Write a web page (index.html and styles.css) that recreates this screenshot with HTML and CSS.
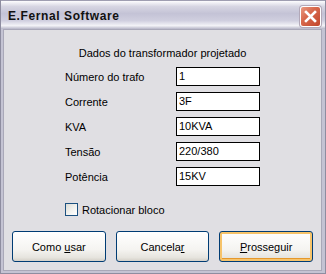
FILE: index.html
```html
<!DOCTYPE html>
<html lang="pt">
<head>
  <meta charset="utf-8">
  <title>E.Fernal Software</title>
  <link rel="stylesheet" href="styles.css">
</head>
<body>
  <div class="window">
    <!-- barra de titulo -->
    <div class="titlebar">
      <span class="title">E.Fernal Software</span>
      <a href="javascript:;" class="close">
        <svg width="21" height="21" viewBox="0 0 21 21">
          <path d="M6 6 L15 15 M15 6 L6 15" stroke="#fff" stroke-width="2.6" stroke-linecap="square"/>
        </svg>
      </a>
    </div>

    <div class="client">
      <p class="heading">Dados do transformador projetado</p>

      <div class="fields">
        <label>Número do trafo</label>
        <input type="text" value="1">
        <label>Corrente</label>
        <input type="text" value="3F">
        <label>KVA</label>
        <input type="text" value="10KVA">
        <label>Tensão</label>
        <input type="text" value="220/380">
        <label>Potência</label>
        <input type="text" value="15KV">
      </div>

      <div class="check-row">
        <span class="check"></span>
        <span>Rotacionar bloco</span>
      </div>

      <div class="buttons">
        <button>Como <u>u</u>sar</button>
        <button>Cancela<u>r</u></button>
        <button class="default"><u>P</u>rosseguir</button>
      </div>
    </div>
  </div>
</body>
</html>
```

FILE: styles.css
```css
* {
  margin: 0;
  padding: 0;
  box-sizing: border-box;
}
body {
  background: #e0dfe3;
  font-family: "Liberation Sans", Arial, sans-serif;
  font-size: 11px;
  color: #000;
}
.window {
  width: 326px;
  height: 274px;
  background: #c4c3d3;
  border: 1px solid #8e8da0;
  border-top: none;
  padding: 0 3px 2px 2px;
  display: flex;
  flex-direction: column;
}
.titlebar {
  height: 29px;
  margin: 0 -3px 0 -2px;
  padding: 0 4px 0 7px;
  display: flex;
  align-items: center;
  justify-content: space-between;
  border-top: 1px solid #9f9eb1;
  background: linear-gradient(#fdfdfe 0%, #d6d5e2 20%, #c4c3d6 45%, #d0cfdf 70%, #f3f3f7 88%, #b6b5c7 100%);
}
.title {
  font-weight: bold;
  font-size: 12px;
  letter-spacing: 0.6px;
  color: #111;
  margin-top: 2px;
}
.close {
  display: block;
  width: 21px;
  height: 21px;
  margin-top: 2px;
  border: 1px solid #fff;
  border-radius: 3px;
  background: linear-gradient(135deg, #e99a82 0%, #d8694d 40%, #c2452b 100%);
  box-shadow: 0 0 0 1px #b2a8b8;
}
.close svg {
  display: block;
  margin: -1px;
}
.client {
  flex: 1;
  background: #e0dfe3;
  border: 1px solid #a9a8b8;
  padding: 16px 8px 8px 61px;
}
.heading {
  line-height: 14px;
  margin-left: -53px;
  text-align: center;
}
.fields {
  margin-top: 7px;
  display: grid;
  grid-template-columns: 111px 84px;
  grid-auto-rows: 19px;
  row-gap: 6px;
  align-items: center;
}
.fields input {
  height: 19px;
  width: 84px;
  border: 1px solid #000;
  background: #fff;
  font: inherit;
  padding: 0 2px 1px;
  outline: none;
}
.check-row {
  margin-top: 17px;
  height: 13px;
  display: flex;
  align-items: center;
  gap: 4px;
}
.check {
  width: 13px;
  height: 13px;
  border: 1px solid #1c5180;
  background: linear-gradient(135deg, #dcdcd6 0%, #f4f4f1 60%, #fff 100%);
}
.buttons {
  margin: 15px 0 0 -53px;
  display: flex;
  gap: 10px;
}
.buttons button {
  width: 94px;
  height: 31px;
  border: 1px solid #003c74;
  border-radius: 3px;
  background: linear-gradient(#ffffff 0%, #f5f4f1 60%, #e6e4de 88%, #d4d0c8 100%);
  font: inherit;
  color: #000;
}
.buttons button.default {
  box-shadow: inset 0 0 0 2px #f6c36a, inset 0 -1px 0 2px #e6982b;
}
```
